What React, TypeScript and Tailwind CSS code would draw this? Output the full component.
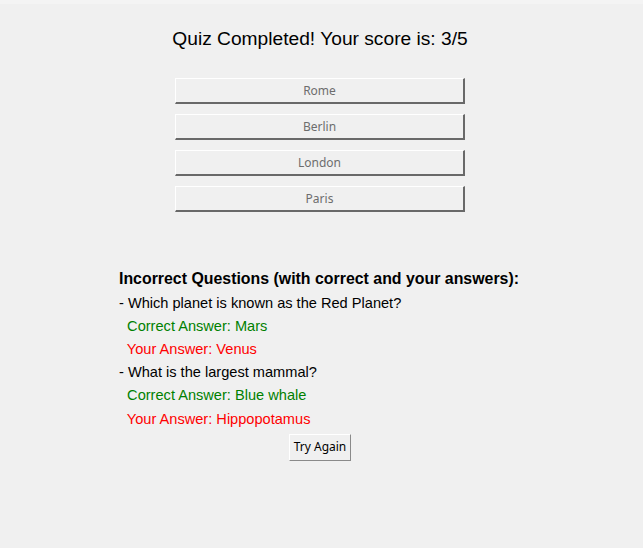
import React from "react";

const options = ["Rome", "Berlin", "London", "Paris"];

export default function App() {
  return (
    <div className="w-[643px] h-[548px] bg-[#f0f0f0] flex flex-col" style={{ fontFamily: '"Liberation Sans", Arial, sans-serif' }}>
      <div className="w-full h-[4px] bg-[#f4f4f4] shrink-0" />
      <div className="w-[640px] flex flex-col items-center">
        <div className="mt-[23px] text-[19.2px] leading-[24px] text-black">Quiz Completed! Your score is: 3/5</div>
        <div className="mt-[27px] flex flex-col gap-[10px]">
          {options.map((o) => (
            <div
              key={o}
              className="w-[290px] h-[26px] flex items-center justify-center border-t border-l border-white border-b-2 border-r-2 border-b-[#696969] border-r-[#696969] text-[12px] text-[#6d6d6d] bg-[#f0f0f0]"
              style={{ fontFamily: '"Noto Sans", "Open Sans", sans-serif' }}
            >
              {o}
            </div>
          ))}
        </div>
        <div className="mt-[55px] w-fit pr-[2px] flex flex-col text-[14.6px] leading-[23.2px] whitespace-pre">
          <div className="font-bold text-black text-[15.9px] leading-[24.6px]">Incorrect Questions (with correct and your answers):</div>
          <div className="text-black">- Which planet is known as the Red Planet?</div>
          <div className="text-[#008000]">  Correct Answer: Mars</div>
          <div className="text-[#ff0000]">  Your Answer: Venus</div>
          <div className="text-black">- What is the largest mammal?</div>
          <div className="text-[#008000]">  Correct Answer: Blue whale</div>
          <div className="text-[#ff0000]">  Your Answer: Hippopotamus</div>
        </div>
        <div
          className="mt-[3px] w-[62px] h-[27px] flex items-center justify-center border-t border-l border-white border-b border-r border-b-[#8a8a8a] border-r-[#8a8a8a] text-[12px] text-black bg-[#f0f0f0]"
          style={{ fontFamily: '"Noto Sans", "Open Sans", sans-serif' }}
        >
          Try Again
        </div>
      </div>
    </div>
  );
}
